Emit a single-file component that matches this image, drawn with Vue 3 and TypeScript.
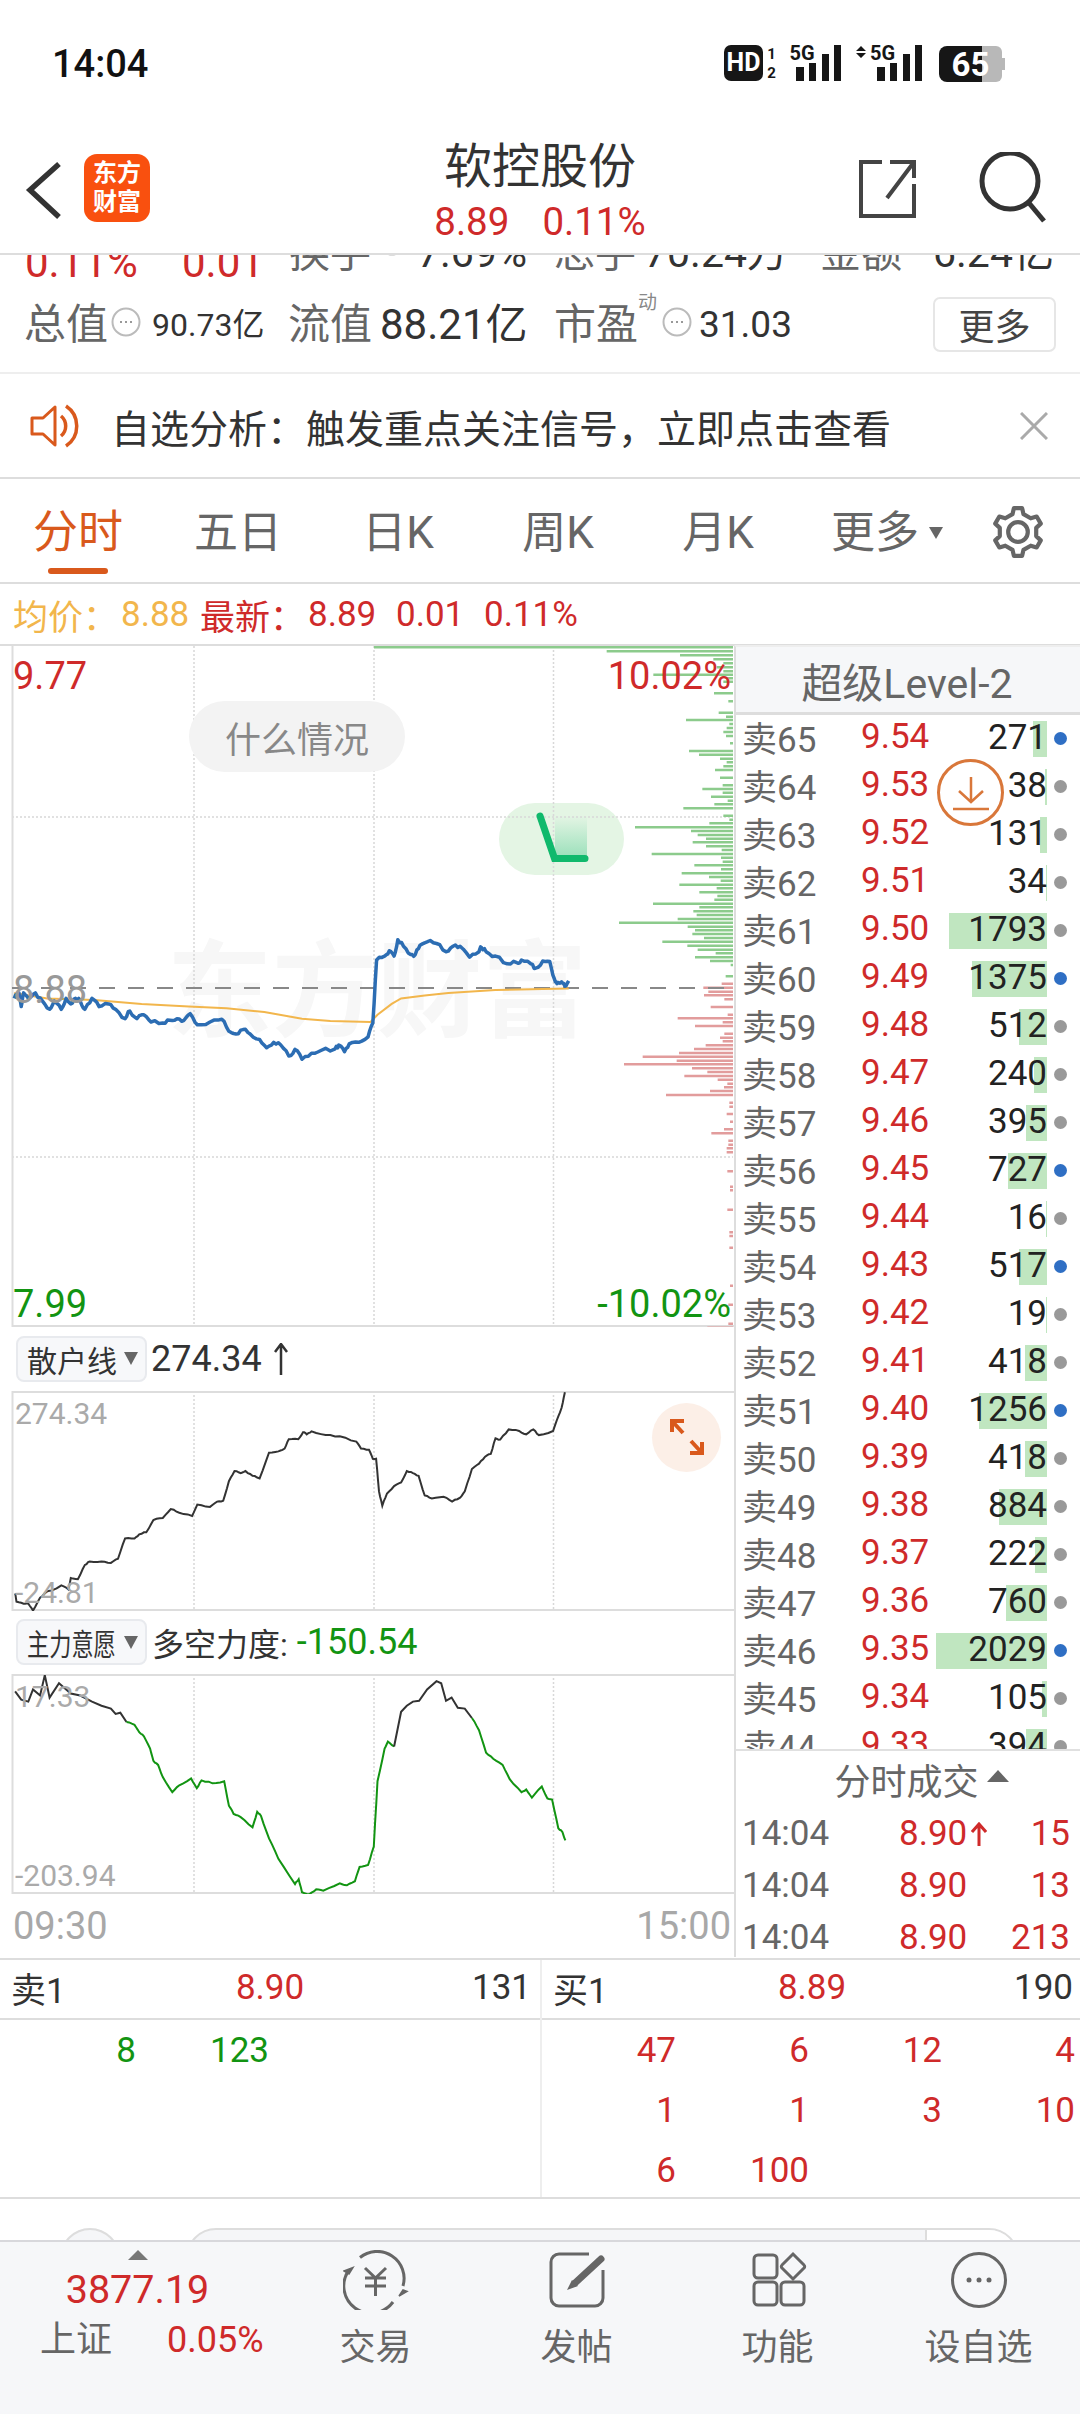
<script setup lang="ts">
type Pt = [number, number]

// small repeatable wobble so the plotted lines don't look too clean
const rough = (p: Pt[], amp: number): Pt[] => {
  const out: Pt[] = []
  let seed = 7
  const next = () => {
    seed = (seed * 137 + 59) % 1009
    return seed / 1009 - 0.5
  }
  p.forEach((pt, i) => {
    out.push(pt)
    const n = p[i + 1]
    if (!n) return
    for (let k = 1; k < 3; k++) {
      out.push([pt[0] + ((n[0] - pt[0]) * k) / 3, pt[1] + ((n[1] - pt[1]) * k) / 3 + next() * amp])
    }
  })
  return out
}

// chart coords were read off the crops, map them back to page px
const toMain = (p: Pt[]) => p.map(([x, y]) => `${(x / 2.119).toFixed(1)},${(480 + y / 1.823).toFixed(1)}`).join(' ')
const toSub = (p: Pt[]) => p.map(([x, y]) => `${(x / 2.119).toFixed(1)},${(1320 + y / 2.45).toFixed(1)}`).join(' ')

const bluePts: Pt[] = rough([[30,945],[40,935],[45,960],[50,935],[60,945],[75,935],[90,950],[105,965],[115,950],[130,965],[140,945],[150,955],[160,945],[170,950],[180,965],[195,945],[210,960],[230,955],[245,965],[265,982],[275,968],[290,982],[305,975],[320,988],[345,990],[360,985],[375,982],[390,985],[403,973],[418,993],[445,988],[470,983],[485,1005],[500,1010],[515,1002],[530,1010],[550,1020],[565,1035],[580,1025],[595,1030],[612,1050],[625,1038],[640,1056],[660,1045],[680,1040],[710,1037],[718,1030],[730,1042],[740,1028],[760,1025],[780,1015],[790,990],[798,875],[815,868],[825,858],[835,868],[843,838],[855,850],[870,865],[880,865],[890,848],[905,842],[925,845],[945,860],[960,850],[975,850],[995,870],[1015,860],[1020,852],[1030,860],[1050,868],[1075,882],[1095,880],[1105,875],[1125,882],[1135,890],[1150,877],[1165,878],[1175,910],[1180,918],[1190,915],[1197,923],[1205,913]], 7)
const avgPts: Pt[] = [[30,935],[100,945],[200,948],[300,955],[400,960],[480,963],[560,970],[640,982],[700,986],[785,988],[800,975],[830,955],[850,945],[900,940],[950,935],[1050,930],[1150,928],[1205,927]]

const retailPts: Pt[] = rough([[32,670],[35,690],[50,695],[60,695],[70,712],[85,680],[100,665],[115,660],[130,650],[145,660],[150,632],[165,635],[180,600],[190,592],[215,592],[235,595],[250,585],[265,535],[285,535],[295,525],[310,520],[325,490],[345,485],[362,463],[380,472],[407,480],[418,452],[445,458],[460,445],[473,443],[485,395],[497,370],[510,375],[520,370],[535,382],[550,388],[570,325],[590,322],[603,315],[612,292],[632,292],[642,275],[650,280],[660,273],[690,282],[720,285],[755,298],[765,315],[782,318],[790,340],[797,340],[803,420],[810,455],[820,425],[835,407],[850,398],[862,370],[875,375],[887,382],[900,430],[915,437],[940,433],[958,445],[975,435],[985,420],[1000,365],[1015,352],[1028,335],[1040,328],[1050,290],[1060,293],[1078,268],[1100,272],[1115,280],[1130,268],[1142,282],[1172,272],[1180,245],[1190,215],[1197,177]], 3)

const willBlackA: Pt[] = [[32,910],[45,930],[60,935],[70,905],[85,920],[95,870],[105,925],[125,890],[150,915],[170,920],[195,935],[215,945],[235,952],[245,965],[255,962],[268,985]]
const willGreenA: Pt[] = rough([[268,985],[285,992],[295,1010],[305,1020],[318,1050],[325,1080],[335,1090],[345,1120],[365,1157],[380,1140],[405,1123],[417,1147],[427,1128],[450,1135],[475,1130],[485,1190],[495,1210],[510,1218],[535,1243],[545,1205],[553,1215],[570,1270],[590,1320],[625,1382],[633,1370],[640,1402],[655,1407],[670,1395],[685,1398],[720,1380],[735,1385],[752,1375],[762,1340],[780,1335],[792,1290],[800,1130],[815,1050],[822,1033],[835,1045]], 3)
const willBlackB: Pt[] = [[835,1045],[850,960],[862,945],[875,935],[888,933],[905,905],[925,885],[935,890],[945,933],[957,925],[970,950],[985,952],[1000,975]]
const willGreenB: Pt[] = rough([[1000,975],[1015,1005],[1030,1060],[1045,1075],[1065,1090],[1080,1125],[1105,1157],[1115,1150],[1127,1170],[1148,1143],[1160,1172],[1170,1175],[1183,1245],[1192,1255],[1198,1275]], 3)

// volume profile: [y, left x] of each bar
const greenBars: Pt[] = [[22,-858],[34,-160],[46,60],[58,160],[70,190],[82,170],[94,190],[104,-20],[115,200],[125,190],[160,162],[184,205],[218,176],[230,198],[240,78],[252,208],[264,200],[276,190],[288,198],[310,210],[333,87],[344,117],[356,180],[367,200],[379,190],[390,165],[413,180],[436,188],[447,127],[458,188],[470,153],[482,203],[493,163],[505,70],[527,190],[539,208],[550,148],[562,-75],[573,93],[585,113],[596,138],[607,98],[619,138],[630,185],[642,-25],[653,183],[665,188],[676,103],[688,183],[700,65],[711,147],[722,182],[734,58],[745,170],[757,118],[768,172],[779,163],[791,-21],[802,118],[814,100],[825,110],[837,53],[848,-123],[860,83],[871,105],[882,97],[894,132],[905,7],[917,82],[929,113],[940,167],[952,105],[963,150],[975,212],[1009,197]]
const redBars: Pt[] = [[11,305],[23,250],[35,265],[46,252],[58,313],[81,272],[104,323],[115,173],[127,308],[138,225],[161,313],[173,300],[184,308],[196,257],[207,222],[219,177],[230,68],[242,170],[253,12],[265,216],[276,262],[288,193],[299,293],[311,322],[322,312],[333,270],[345,138],[368,328],[380,328],[402,320],[425,330],[448,312],[460,274],[482,325],[494,325],[505,320],[517,320],[574,322],[620,330],[631,330],[689,322],[757,328],[768,328],[803,328],[917,330],[974,325],[1031,325],[1043,262]]
const greenPath = greenBars.map(([y, x]) => `M${660 + x / 3} ${(640 + y / 3).toFixed(1)}H733`).join('')
const redPath = redBars.map(([y, x]) => `M${620 + x / 3} ${(980 + y / 3).toFixed(1)}H733`).join('')

interface Ask { n: number; price: string; qty: number; w: number; blue?: boolean }
const asks: Ask[] = [
  { n: 65, price: '9.54', qty: 271, w: 14, blue: true },
  { n: 64, price: '9.53', qty: 38, w: 2 },
  { n: 63, price: '9.52', qty: 131, w: 7 },
  { n: 62, price: '9.51', qty: 34, w: 1 },
  { n: 61, price: '9.50', qty: 1793, w: 98 },
  { n: 60, price: '9.49', qty: 1375, w: 75, blue: true },
  { n: 59, price: '9.48', qty: 512, w: 28 },
  { n: 58, price: '9.47', qty: 240, w: 13 },
  { n: 57, price: '9.46', qty: 395, w: 21 },
  { n: 56, price: '9.45', qty: 727, w: 39, blue: true },
  { n: 55, price: '9.44', qty: 16, w: 1 },
  { n: 54, price: '9.43', qty: 517, w: 28, blue: true },
  { n: 53, price: '9.42', qty: 19, w: 1 },
  { n: 52, price: '9.41', qty: 418, w: 22 },
  { n: 51, price: '9.40', qty: 1256, w: 68, blue: true },
  { n: 50, price: '9.39', qty: 418, w: 22 },
  { n: 49, price: '9.38', qty: 884, w: 48 },
  { n: 48, price: '9.37', qty: 222, w: 12 },
  { n: 47, price: '9.36', qty: 760, w: 41 },
  { n: 46, price: '9.35', qty: 2029, w: 111, blue: true },
  { n: 45, price: '9.34', qty: 105, w: 5 },
  { n: 44, price: '9.33', qty: 394, w: 21 },
]

const trades = [
  { price: '8.90', up: true, qty: 15 },
  { price: '8.90', up: false, qty: 13 },
  { price: '8.90', up: false, qty: 213 },
]

const tabs = ['分时', '五日', '日K', '周K', '月K']
const buyRows = ['47', '6', '12', '4', '1', '1', '3', '10', '6', '100']

// six tooth gear outline
const gearPath = (() => {
  const out: string[] = []
  for (let i = 0; i < 6; i++) {
    const a = (i * Math.PI) / 3 - Math.PI / 2
    const pts: [number, number][] = [
      [-0.3, 20], [-0.17, 26], [0.17, 26], [0.3, 20],
    ]
    pts.forEach(([d, r]) => {
      out.push(`${(30 + r * Math.cos(a + d)).toFixed(1)} ${(30 + r * Math.sin(a + d)).toFixed(1)}`)
    })
  }
  return 'M' + out.join('L') + 'Z'
})()
</script>

<template>
  <div class="page">
    <div class="status">
      <span class="clock">14:04</span>
      <svg class="status-icons" width="290" height="40" viewBox="720 44 290 40">
        <rect x="724" y="46" width="39" height="36" rx="7" fill="#161616" />
        <text x="743.5" y="72" class="st hd" text-anchor="middle">HD</text>
        <text x="771.5" y="60" class="st small" text-anchor="middle">1</text>
        <text x="771.5" y="79" class="st small" text-anchor="middle">2</text>
        <text x="802" y="61" class="st five" text-anchor="middle">5G</text>
        <path d="M796 68h8v14h-8zM809 64h7v18h-7zM822 55h7v27h-7zM834 46h7v36h-7z" fill="#161616" />
        <path d="M861 47l5 5h-10zM861 59l5-5h-10z" fill="#161616" />
        <text x="882.5" y="61" class="st five" text-anchor="middle">5G</text>
        <path d="M877 68h8v14h-8zM890 64h7v18h-7zM903 55h7v27h-7zM915 46h7v36h-7z" fill="#161616" />
        <path d="M982 47h14a6 6 0 0 1 6 6v24a6 6 0 0 1-6 6h-14z" fill="#b8b8b8" />
        <path d="M1002 59h3v12h-3z" fill="#b8b8b8" />
        <path d="M982 47h-35a8 8 0 0 0-8 8v20a8 8 0 0 0 8 8h35z" fill="#161616" />
        <text x="970.5" y="77" class="st batt" text-anchor="middle">65</text>
      </svg>
    </div>

    <header class="head">
      <div class="head-left">
        <svg width="40" height="60" viewBox="0 0 40 60">
          <path d="M35 3L6 29l29 27" fill="none" stroke="#333" stroke-width="5.5" />
        </svg>
        <div class="logo"><span>东方</span><span>财富</span></div>
      </div>
      <div class="head-title">
        <div class="name">软控股份</div>
        <div class="sub"><span>8.89</span><span>0.11%</span></div>
      </div>
      <div class="head-right">
        <svg width="60" height="62" viewBox="857 158 60 62">
          <path d="M882 162h-21v54h53v-32M914 162l-27 36M890 162h24v16" fill="none" stroke="#444" stroke-width="4" />
        </svg>
        <svg width="72" height="72" viewBox="976 152 72 72">
          <circle cx="1010" cy="181" r="28" fill="none" stroke="#333" stroke-width="5" />
          <path d="M1029 203l15 18" stroke="#333" stroke-width="5" />
        </svg>
      </div>
    </header>

    <div class="clip">
      <div class="clip-in">
        <span class="c1 red big">0.11%</span>
        <span class="c2 red big">0.01</span>
        <span class="c3 gray">换手<svg class="clip-info" width="30" height="30" viewBox="0 0 30 30"><circle cx="15" cy="15" r="13.5" fill="none" stroke="#bbb" stroke-width="2" /></svg></span>
        <span class="c4 dark">7.69%</span>
        <span class="c5 gray">总手</span>
        <span class="c6 dark">70.24万</span>
        <span class="c7 gray">金额</span>
        <span class="c8 dark">6.24亿</span>
      </div>
    </div>

    <div class="stats">
      <div class="stat s1">
        <span class="gray">总值</span>
        <svg class="info" width="30" height="30" viewBox="0 0 30 30"><circle cx="15" cy="15" r="13.5" fill="none" stroke="#bbb" stroke-width="2" /><path d="M9 15h2M14 15h2M19 15h2" stroke="#999" stroke-width="2" /></svg>
        <span class="dark v30">90.73亿</span>
      </div>
      <div class="stat s2">
        <span class="gray">流值</span>
        <span class="dark v40">88.21亿</span>
      </div>
      <div class="stat s3">
        <span class="gray">市盈</span>
        <span class="sup">动</span>
        <svg class="info" width="30" height="30" viewBox="0 0 30 30"><circle cx="15" cy="15" r="13.5" fill="none" stroke="#bbb" stroke-width="2" /><path d="M9 15h2M14 15h2M19 15h2" stroke="#999" stroke-width="2" /></svg>
        <span class="dark v36">31.03</span>
      </div>
      <div class="more">更多</div>
    </div>

    <div class="notice">
      <svg width="52" height="46" viewBox="29 403 52 46">
        <path d="M32 418h11l12-11v38l-12-11H32z" fill="none" stroke="#d9591c" stroke-width="3" stroke-linejoin="round" />
        <path d="M61 416a13 13 0 0 1 0 20M66 406a24 24 0 0 1 0 40" fill="none" stroke="#d9591c" stroke-width="3.5" />
      </svg>
      <span class="notice-text">自选分析：触发重点关注信号，立即点击查看</span>
      <svg class="notice-x" width="28" height="28" viewBox="0 0 28 28">
        <path d="M1 1l26 26M27 1L1 27" stroke="#aaa" stroke-width="3" />
      </svg>
    </div>

    <nav class="tabs">
      <div v-for="(t, i) in tabs" :key="t" class="tab" :class="{ on: i === 0 }">{{ t }}</div>
      <div class="tab tab-more">更多<i class="tri" /></div>
      <svg class="gear" width="56" height="56" viewBox="0 0 60 60">
        <path :d="gearPath" fill="none" stroke="#666" stroke-width="4.5" stroke-linejoin="round" />
        <circle cx="30" cy="30" r="10.5" fill="none" stroke="#666" stroke-width="4.5" />
      </svg>
    </nav>

    <div class="quote">
      <span class="yel q1">均价：</span><span class="yel q2">8.88</span>
      <span class="red q3">最新：</span><span class="red q4">8.89</span>
      <span class="red q5">0.01</span><span class="red q6">0.11%</span>
    </div>

    <div class="body">
      <div class="left">
        <div class="plot main">
          <div class="trend-pill" />
          <div class="mark">东方财富</div>
          <svg class="plot-svg" viewBox="0 646 734 681" preserveAspectRatio="none">
            <path d="M194 646V1327M374 646V1327M553.5 646V1327M12 817H733M12 1157H733" stroke="#d8d8d8" stroke-width="1.5" stroke-dasharray="2 2" />
            <path d="M12.5 646V1327M12 1326H734" stroke="#ddd" stroke-width="2" />
            <path :d="greenPath" stroke="#8ccb8c" stroke-width="2.5" />
            <path :d="redPath" stroke="#e29c9c" stroke-width="2.5" />
            <path d="M12 988H733" stroke="#888" stroke-width="2" stroke-dasharray="16 13" />
            <polyline :points="toMain(avgPts)" fill="none" stroke="#f2b64c" stroke-width="2" />
            <polyline :points="toMain(bluePts)" fill="none" stroke="#2c6db3" stroke-width="3.5" stroke-linejoin="round" />
            <path d="M555 816h32v42h-32z" fill="url(#fade)" />
            <path d="M540 816l14.5 42.5H585" fill="none" stroke="#10b96c" stroke-width="7" stroke-linecap="round" />
            <defs>
              <linearGradient id="fade" x1="0" y1="0" x2="0" y2="1">
                <stop offset="0" stop-color="#10b96c" stop-opacity="0" />
                <stop offset="1" stop-color="#10b96c" stop-opacity=".35" />
              </linearGradient>
            </defs>
          </svg>
          <span class="lbl red tl">9.77</span>
          <span class="lbl red tr">10.02%</span>
          <span class="lbl base">8.88</span>
          <span class="lbl green bl">7.99</span>
          <span class="lbl green br">-10.02%</span>
          <div class="what">什么情况</div>
        </div>

        <div class="sel-row">
          <div class="sel"><span class="sel-name">散户线</span><i class="sel-tri" /></div>
          <span class="sel-val">274.34</span>
          <svg width="14" height="32" viewBox="0 0 14 32" class="sel-arrow"><path d="M7 32V2M1 9l6-8 6 8" fill="none" stroke="#333" stroke-width="2.5" /></svg>
        </div>
        <div class="plot sub1">
          <svg class="plot-svg" viewBox="0 1391 734 220" preserveAspectRatio="none">
            <path d="M194 1391V1611M374 1391V1611M553.5 1391V1611" stroke="#d8d8d8" stroke-width="1.5" stroke-dasharray="2 2" />
            <path d="M12 1392H734M12 1610H734M12.5 1391V1611" stroke="#ddd" stroke-width="2" />
            <polyline :points="toSub(retailPts)" fill="none" stroke="#333" stroke-width="2" />
          </svg>
          <span class="lbl-s s-top">274.34</span>
          <span class="lbl-s s-bot">-24.81</span>
          <div class="expand">
            <svg width="34" height="36" viewBox="0 0 34 36">
              <path d="M2 13V2h12M2 2l11 12M32 23v11H20M32 34L21 22" fill="none" stroke="#d9591c" stroke-width="4" />
            </svg>
          </div>
        </div>
        <div class="sel-row">
          <div class="sel"><span class="sel-name narrow">主力意愿</span><i class="sel-tri" /></div>
          <span class="sel-txt">多空力度:</span>
          <span class="sel-val green">-150.54</span>
        </div>
        <div class="plot sub2">
          <svg class="plot-svg" viewBox="0 1674 734 220" preserveAspectRatio="none">
            <path d="M194 1674V1894M374 1674V1894M553.5 1674V1894" stroke="#d8d8d8" stroke-width="1.5" stroke-dasharray="2 2" />
            <path d="M12 1675H734M12 1893H734M12.5 1674V1894" stroke="#ddd" stroke-width="2" />
            <polyline :points="toSub(willBlackA)" fill="none" stroke="#333" stroke-width="2" />
            <polyline :points="toSub(willGreenA)" fill="none" stroke="#129412" stroke-width="2" />
            <polyline :points="toSub(willBlackB)" fill="none" stroke="#333" stroke-width="2" />
            <polyline :points="toSub(willGreenB)" fill="none" stroke="#129412" stroke-width="2" />
          </svg>
          <span class="lbl-s s-top">17.33</span>
          <span class="lbl-s s-bot">-203.94</span>
        </div>
        <div class="times"><span>09:30</span><span>15:00</span></div>
      </div>

      <aside class="panel">
        <div class="lv2">超级Level-2</div>
        <div class="rows">
          <div v-for="a in asks" :key="a.n" class="row">
            <span class="r-lab">卖{{ a.n }}</span>
            <span class="r-price">{{ a.price }}</span>
            <span class="r-qty">
              <i class="bar" :style="{ width: a.w + 'px' }" />
              <b>{{ a.qty }}</b>
            </span>
            <i class="dot" :class="{ blue: a.blue }" />
          </div>
        </div>
        <div class="dl">
          <svg width="44" height="44" viewBox="0 0 44 44">
            <path d="M22 6v25M10 20l12 11 12-11M4 38h36" fill="none" stroke="#d9773a" stroke-width="2.5" />
          </svg>
        </div>
        <div class="tr-head">分时成交<i class="tr-tri" /></div>
        <div v-for="(t, i) in trades" :key="i" class="trade">
          <span class="t-time">14:04</span>
          <span class="t-price">{{ t.price }}<svg v-if="t.up" class="t-up" width="16" height="24" viewBox="0 0 16 24"><path d="M8 24V3M1 10l7-8 7 8" fill="none" stroke="#cf2a2a" stroke-width="3" /></svg></span>
          <span class="t-qty">{{ t.qty }}</span>
        </div>
      </aside>
    </div>

    <section class="book">
      <div class="book-top">
        <div class="b-side"><span>卖1</span><span class="red b-p">8.90</span><span class="b-q">131</span></div>
        <div class="b-side b-buy"><span>买1</span><span class="red b-p">8.89</span><span class="b-q">190</span></div>
      </div>
      <div class="book-low">
        <div class="grid4">
          <span class="green">8</span><span class="green">123</span>
        </div>
        <div class="grid4 g-buy">
          <span v-for="(v, i) in buyRows" :key="i" class="red">{{ v }}</span>
        </div>
      </div>
    </section>

    <div class="peek">
      <div class="peek-circle" />
      <div class="peek-pill"><div class="peek-btn" /></div>
    </div>

    <footer class="nav">
      <div class="idx">
        <i class="idx-tri" />
        <div class="idx-val red">3877.19</div>
        <div class="idx-row"><span class="idx-name">上证</span><span class="red">0.05%</span></div>
      </div>
      <div class="nav-item">
        <svg width="66" height="60" viewBox="0 0 66 60">
          <path d="M17 7.5A27 27 0 0 1 60 36M50 52A27 27 0 0 1 6 20" fill="none" stroke="#666" stroke-width="3" />
          <path d="M60 40l-4 6 8-4.5zM1 21l9-3.5L6 24z" fill="#666" stroke="#666" stroke-width="1.5" />
          <path d="M22 18l10.5 10L43 18M22 28h21M22 36h21M32.5 28v18" fill="none" stroke="#666" stroke-width="3" />
        </svg>
        <span>交易</span>
      </div>
      <div class="nav-item">
        <svg width="60" height="60" viewBox="0 0 60 60">
          <path d="M42 4H12a8 8 0 0 0-8 8v36a8 8 0 0 0 8 8h36a8 8 0 0 0 8-8V20" fill="none" stroke="#666" stroke-width="3" />
          <path d="M28 33L54 9" stroke="#666" stroke-width="7" stroke-linecap="round" />
          <path d="M20 40l5-10 6 6z" fill="#666" />
        </svg>
        <span>发帖</span>
      </div>
      <div class="nav-item">
        <svg width="60" height="60" viewBox="0 0 60 60">
          <rect x="6" y="5" width="23" height="23" rx="4" fill="none" stroke="#666" stroke-width="3" />
          <rect x="6" y="32" width="23" height="23" rx="4" fill="none" stroke="#666" stroke-width="3" />
          <rect x="33" y="32" width="23" height="23" rx="4" fill="none" stroke="#666" stroke-width="3" />
          <path d="M45 4l11 11a2 2 0 0 1 0 3L45 29 34 18a2 2 0 0 1 0-3z" fill="none" stroke="#666" stroke-width="3" />
        </svg>
        <span>功能</span>
      </div>
      <div class="nav-item">
        <svg width="60" height="60" viewBox="0 0 60 60">
          <circle cx="30" cy="30" r="26.5" fill="none" stroke="#666" stroke-width="3" />
          <circle cx="20" cy="30" r="2.5" fill="#666" /><circle cx="30" cy="30" r="2.5" fill="#666" /><circle cx="40" cy="30" r="2.5" fill="#666" />
        </svg>
        <span>设自选</span>
      </div>
    </footer>
  </div>
</template>

<style>
html, body { margin: 0; background: #fff; }
</style>

<style scoped>
.page {
  width: 1080px;
  height: 2414px;
  overflow: hidden;
  background: #fff;
  font-family: Roboto, "Noto Sans CJK SC", sans-serif;
  color: #333;
}
i { display: block; font-style: normal; }
.red { color: #cf2a2a; }
.green { color: #129412; }
.yel { color: #f2b64c; }
.gray { color: #666; }
.dark { color: #333; }

/* status bar */
.status {
  height: 130px;
  padding: 0 70px 0 52px;
  box-sizing: border-box;
  display: flex;
  justify-content: space-between;
  align-items: flex-start;
}
.clock { font-size: 38px; font-weight: 500; color: #111; line-height: 44px; margin-top: 42px; }
.status-icons { margin-top: 43px; }
.st { font-family: Roboto, sans-serif; font-weight: 700; fill: #161616; }
.hd { font-size: 25px; fill: #fff; }
.small { font-size: 15px; }
.five { font-size: 20px; }
.batt { font-size: 33px; fill: #fff; font-weight: 700; }

/* header */
.head {
  height: 125px;
  box-sizing: border-box;
  border-bottom: 2px solid #ddd;
  display: flex;
  align-items: flex-start;
  position: relative;
}
.head-left { width: 300px; display: flex; align-items: flex-start; padding-left: 24px; box-sizing: border-box; }
.head-left svg { margin-top: 31px; }
.logo {
  width: 66px;
  height: 68px;
  margin: 24px 0 0 20px;
  border-radius: 13px;
  background: #f9500f;
  color: #fff;
  font-size: 24px;
  font-weight: 700;
  line-height: 29px;
  display: flex;
  flex-direction: column;
  align-items: center;
  justify-content: center;
}
.head-title { width: 480px; text-align: center; }
.name { font-size: 48px; line-height: 60px; margin-top: 7px; color: #333; }
.sub { font-size: 38.5px; line-height: 44px; color: #cf2a2a; display: flex; justify-content: center; gap: 33px; margin-top: 3px; }
.head-right { flex: 1; position: relative; display: flex; align-items: flex-start; padding-left: 77px; gap: 59px; }
.head-right svg { margin-top: 28px; flex: none; }
.head-right svg:last-child { margin-top: 22px; }

/* clipped quote row */
.clip { height: 23px; overflow: hidden; position: relative; }
.clip-in { display: flex; align-items: flex-start; height: 23px; margin-top: -19px; font-size: 41px; line-height: 50px; padding-left: 25px; }
.big { font-size: 42px; }
.c1 { width: 157px; flex: none; padding-top: 2px; }
.c2 { width: 107px; flex: none; padding-top: 2px; }
.c3 { width: 128px; flex: none; margin-top: -8px; position: relative; }
.clip-info { position: absolute; left: 88px; top: -2px; }
.c4 { width: 137px; flex: none; margin-top: -8px; }
.c5 { width: 90px; flex: none; margin-top: -8px; }
.c6 { width: 176px; flex: none; margin-top: -8px; }
.c7 { width: 113px; flex: none; margin-top: -8px; }
.c8 { flex: none; margin-top: -8px; }

.stats {
  height: 96px;
  box-sizing: border-box;
  border-bottom: 2px solid #eee;
  display: flex;
  align-items: center;
  padding-left: 24px;
  font-size: 42px;
}
.stat { display: flex; align-items: center; line-height: 50px; }
.s1 { width: 264px; }
.s2 { width: 266px; }
.s3 { width: 379px; position: relative; }
.info { margin-left: 3px; flex: none; }
.s1 .info { margin-top: -6px; }
.s3 .info { margin-top: -6px; }
.v30 { font-size: 32px; margin-left: 11px; }
.v40 { font-size: 42px; margin-left: 8px; }
.v36 { font-size: 37px; margin-left: 7px; }
.sup { font-size: 19px; color: #888; width: 21px; margin-top: -44px; line-height: 24px; }
.more {
  width: 123px;
  height: 55px;
  box-sizing: border-box;
  border: 2px solid #e6e6e6;
  border-radius: 7px;
  font-size: 36px;
  color: #444;
  display: flex;
  align-items: center;
  justify-content: center;
  margin-top: -2px;
}

.notice {
  height: 105px;
  box-sizing: border-box;
  border-bottom: 2px solid #ddd;
  display: flex;
  align-items: center;
  padding-left: 29px;
}
.notice-text { font-size: 39px; color: #333; margin-left: 30px; white-space: nowrap; }
.notice-x { margin-left: auto; margin-right: 32px; }

.tabs {
  height: 105px;
  box-sizing: border-box;
  border-bottom: 2px solid #ddd;
  display: flex;
  align-items: flex-start;
  position: relative;
}
.tab { width: 160px; text-align: center; font-size: 44px; line-height: 60px; margin-top: 24px; color: #666; position: relative; }
.tab.on { color: #d9591c; font-size: 45px; margin-left: -2px; }
.tab.on::after {
  content: "";
  position: absolute;
  left: 50px;
  width: 60px;
  top: 65px;
  height: 6px;
  border-radius: 3px;
  background: #d9591c;
}
.tab-more { display: flex; align-items: center; justify-content: center; width: 190px; margin-left: -6px; }
.tri { width: 0; height: 0; margin-left: 10px; border: 7px solid transparent; border-top: 12px solid #666; border-bottom: 0; }
.gear { position: absolute; left: 990px; top: 25px; }

.quote {
  height: 62px;
  box-sizing: border-box;
  border-bottom: 2px solid #ddd;
  position: relative;
  font-size: 35px;
  display: flex;
  align-items: center;
  padding-left: 13px;
}
.q1 { width: 108px; }
.q2 { width: 79px; }
.q3 { width: 108px; }
.q4 { width: 88px; }
.q5 { width: 88px; }

/* body split */
.body { display: flex; height: 1312px; border-bottom: 2px solid #ddd; }
.left { width: 734px; flex: none; }
.plot { position: relative; overflow: hidden; }
.plot-svg { position: absolute; inset: 0; width: 100%; height: 100%; display: block; }
.main { height: 681px; }
.sub1, .sub2 { height: 220px; }
.mark { position: absolute; left: 167px; top: 287px; font-size: 105px; font-weight: 700; line-height: 120px; color: #f7f7f7; white-space: nowrap; }
.lbl { position: absolute; font-size: 38px; line-height: 40px; }
.tl { left: 13px; top: 10px; }
.tr { right: 3px; top: 10px; }
.base { left: 13px; top: 324px; color: #999; }
.bl { left: 13px; top: 638px; }
.br { right: 3px; top: 638px; }
.what {
  position: absolute;
  left: 189px;
  top: 55px;
  width: 216px;
  height: 71px;
  border-radius: 36px;
  background: #f3f3f3;
  color: #888;
  font-size: 36px;
  display: flex;
  align-items: center;
  justify-content: center;
}
.trend-pill {
  position: absolute;
  left: 499px;
  top: 157px;
  width: 125px;
  height: 72px;
  border-radius: 36px;
  background: #e4f5e4;
}
.sel-row { height: 63.5px; display: flex; align-items: center; }
.sel {
  margin-left: 16px;
  width: 131px;
  height: 46px;
  box-sizing: border-box;
  border: 2px solid #e8eaee;
  border-radius: 8px;
  background: #f7f8fa;
  font-size: 30px;
  color: #333;
  display: flex;
  align-items: center;
  justify-content: space-between;
  padding: 0 7px 0 9px;
  white-space: nowrap;
}
.sel-name { display: block; width: 90px; flex: none; }
.narrow { transform: scaleX(.74); transform-origin: left center; }
.sel-tri { width: 0; height: 0; flex: none; border: 7px solid transparent; border-top: 13px solid #666; border-bottom: 0; }
.sel-val { font-size: 36px; margin-left: 4px; }
.sel-txt { font-size: 32px; margin-left: 5px; color: #333; }
.sel-txt + .sel-val { margin-left: 9px; }
.sel-arrow { margin-left: 12px; }
.lbl-s { position: absolute; left: 15px; font-size: 30px; line-height: 30px; color: #aaa; }
.s-top { top: 8px; }
.s-bot { top: 187px; }
.expand {
  position: absolute;
  left: 652px;
  top: 12px;
  width: 69px;
  height: 69px;
  border-radius: 50%;
  background: #fcefe7;
  display: flex;
  align-items: center;
  justify-content: center;
}
.times { height: 64px; display: flex; justify-content: space-between; align-items: center; padding: 0 3px 0 13px; font-size: 38px; color: #a8a8a8; }

/* right panel */
.panel { flex: 1; position: relative; border-left: 2px solid #ddd; border-top: 2px solid #eee; box-sizing: border-box; overflow: hidden; height: 1312px; margin-top: -1px; }
.lv2 { height: 65px; border-bottom: 3px solid #ddd; background: #f6f7f9; font-size: 41px; color: #666; display: flex; align-items: center; justify-content: center; padding-right: 2px; }
.rows { height: 1034px; overflow: hidden; }
.row { height: 48px; display: flex; align-items: center; padding-left: 7px; font-size: 35px; }
.r-lab { width: 119px; color: #666; flex: none; position: relative; top: -3px; margin-left: -1px; }
.r-price { width: 68px; flex: none; color: #cf2a2a; white-space: nowrap; position: relative; top: -3px; }
.r-qty { flex: none; width: 118px; height: 36px; position: relative; display: flex; justify-content: flex-end; align-items: center; }
.r-qty b { position: relative; top: -2px; font-weight: 400; color: #222; }
.bar { position: absolute; right: 0; top: 0; height: 36px; background: #c0e6c0; }
.dot { width: 13px; height: 13px; border-radius: 50%; background: #999; margin-left: 7px; flex: none; margin-top: -2px; }
.dot.blue { background: #2f6fc4; }
.dl {
  position: absolute;
  left: 201px;
  top: 112px;
  width: 67px;
  height: 67px;
  box-sizing: border-box;
  border: 3px solid #d9773a;
  border-radius: 50%;
  display: flex;
  align-items: center;
  justify-content: center;
  background: rgba(255, 255, 255, .8);
}
.tr-head { height: 58px; border-top: 2px solid #e0e0e0; box-sizing: border-box; font-size: 36px; color: #666; display: flex; align-items: center; justify-content: center; padding-left: 27px; }
.tr-tri { width: 0; height: 0; margin-left: 8px; margin-top: -6px; border: 11px solid transparent; border-bottom: 12px solid #666; border-top: 0; }
.trade { height: 52px; display: flex; align-items: center; font-size: 35px; padding-left: 6px; }
.t-time { width: 157px; color: #666; flex: none; }
.t-price { width: 90px; flex: none; color: #cf2a2a; position: relative; white-space: nowrap; }
.t-up { position: absolute; left: 72px; top: 9px; }
.t-qty { width: 81px; flex: none; text-align: right; color: #cf2a2a; }

/* order book */
.book { font-size: 35px; }
.book-top { display: flex; height: 60px; box-sizing: border-box; border-bottom: 2px solid #ddd; }
.b-side { width: 540px; box-sizing: border-box; display: grid; grid-template-columns: 1fr auto 1fr; align-items: center; color: #333; padding: 0 9px 6px 11px; height: 60px; }
.b-buy { border-left: 2px solid #eee; padding-right: 7px; }
.b-p { position: relative; left: -1px; }
.b-q { justify-self: end; }
.book-low { display: flex; height: 179px; box-sizing: border-box; border-bottom: 2px solid #ddd; }
.grid4 { width: 540px; height: 177px; box-sizing: border-box; display: grid; grid-template-columns: repeat(4, 133px); grid-auto-rows: 60px; align-items: center; justify-items: end; align-content: start; padding-left: 3px; }
.g-buy { border-left: 2px solid #eee; padding-left: 1px; }

.peek { height: 41px; overflow: hidden; display: flex; padding: 29px 0 0 60px; box-sizing: border-box; }
.peek-circle { width: 60px; height: 60px; border-radius: 50%; background: #f5f6f8; box-shadow: inset 0 0 0 2px #ddd; flex: none; }
.peek-pill { width: 833px; height: 60px; margin-left: 66px; border-radius: 32px; border: 2px solid #ddd; box-sizing: border-box; background: #f5f6f8; flex: none; overflow: hidden; display: flex; justify-content: flex-end; }
.peek-btn { width: 90px; height: 60px; background: #fff; border-left: 2px solid #ddd; }

.nav { height: 176px; box-sizing: border-box; border-top: 2px solid #d8d8dc; background: #f6f7f9; display: flex; align-items: flex-start; padding-top: 8px; }
.idx { width: 275px; flex: none; display: flex; flex-direction: column; align-items: center; }
.idx-tri { width: 0; height: 0; border: 10px solid transparent; border-bottom: 10px solid #777; border-top: 0; }
.idx-val { font-size: 39.5px; line-height: 44px; margin-top: 8px; }
.idx-row { display: flex; align-items: center; align-self: flex-start; font-size: 36px; line-height: 44px; margin-top: 6px; padding-left: 40px; }
.idx-name { width: 127px; color: #666; font-size: 36px; }
.nav-item { width: 201px; flex: none; display: flex; flex-direction: column; align-items: center; font-size: 36px; color: #666; line-height: 40px; }
.nav-item span { margin-top: 18px; }
</style>
